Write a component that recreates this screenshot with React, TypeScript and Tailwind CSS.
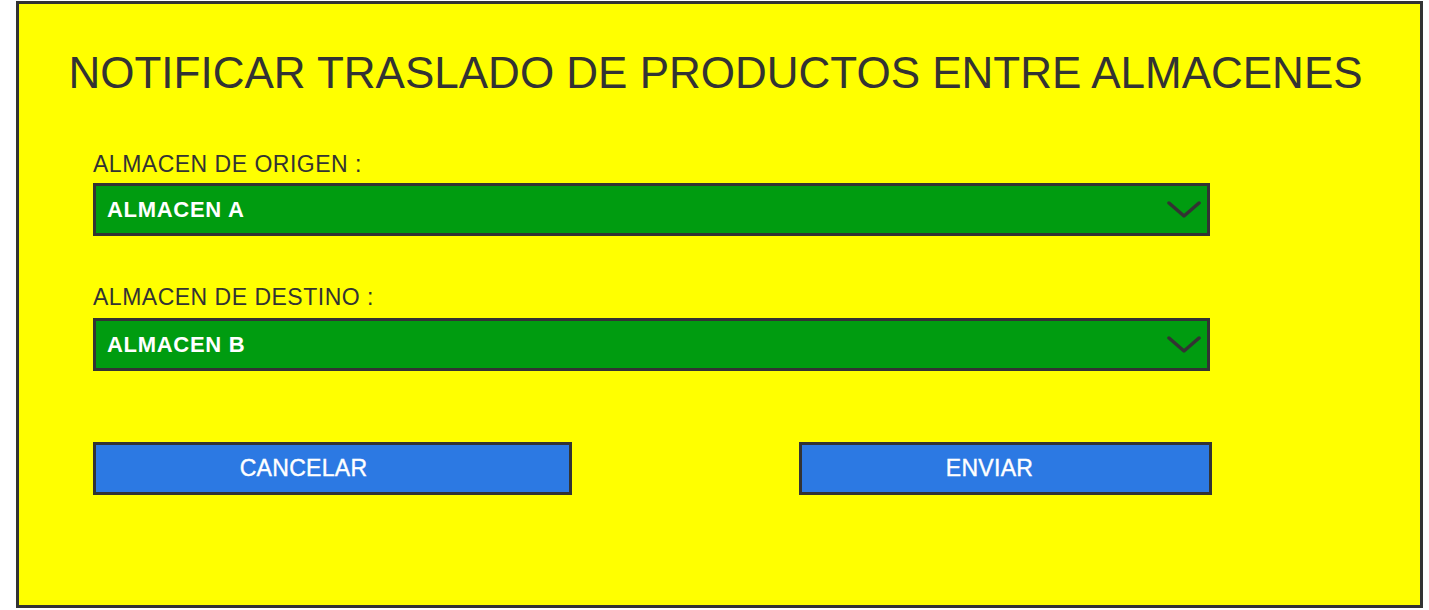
import React from "react";

const Chevron = () => (
    <svg width="34" height="20" viewBox="0 0 34 20" fill="none">
        <path d="M2 3 L17 16 L32 3" stroke="#333" strokeWidth="3.5" strokeLinecap="round" strokeLinejoin="round" />
    </svg>
);

const Select = ({ value }: { value: string }) => {
    return (
        <div className="w-[1117px] h-[53px] border-[3px] border-[#333] bg-[#009c10] flex items-center justify-between pl-[11px] pr-[6px]">
            <span className="text-white font-bold text-[22px] tracking-[0.7px] leading-none">{value}</span>
            <Chevron />
        </div>
    );
};

export default function App() {
    return (
        <div className="w-full h-[610px] bg-white font-['Liberation_Sans',Arial,sans-serif]">
            {/* Main panel */}
            <div className="ml-[16px] mt-[1px] w-[1407px] h-[607px] border-[3px] border-[#333] bg-[#ffff00]">
                <h1 className="mt-[47px] pr-[8px] text-center text-[44px] leading-none text-[#333]">
                    NOTIFICAR TRASLADO DE PRODUCTOS ENTRE ALMACENES
                </h1>

                <div className="pl-[74px] flex flex-col">
                    {/* Origen */}
                    <label className="mt-[58px] text-[23px] tracking-[0.5px] leading-none text-[#333]">ALMACEN DE ORIGEN :</label>
                    <div className="mt-[7px]">
                        <Select value="ALMACEN A" />
                    </div>

                    {/* Destino */}
                    <label className="mt-[50px] text-[23px] tracking-[0.5px] leading-none text-[#333]">ALMACEN DE DESTINO :</label>
                    <div className="mt-[9px]">
                        <Select value="ALMACEN B" />
                    </div>

                    {/* Buttons */}
                    <div className="mt-[71px] flex gap-[227px]">
                        <button className="w-[479px] h-[53px] pr-[58px] border-[3px] border-[#333] bg-[#2c79e3] text-white text-[23px] tracking-[0.3px] leading-none [-webkit-text-stroke:0.4px_white]">
                            CANCELAR
                        </button>
                        <button className="w-[413px] h-[53px] pr-[32px] border-[3px] border-[#333] bg-[#2c79e3] text-white text-[23px] tracking-[0.3px] leading-none [-webkit-text-stroke:0.4px_white]">
                            ENVIAR
                        </button>
                    </div>
                </div>
            </div>
        </div>
    );
}
